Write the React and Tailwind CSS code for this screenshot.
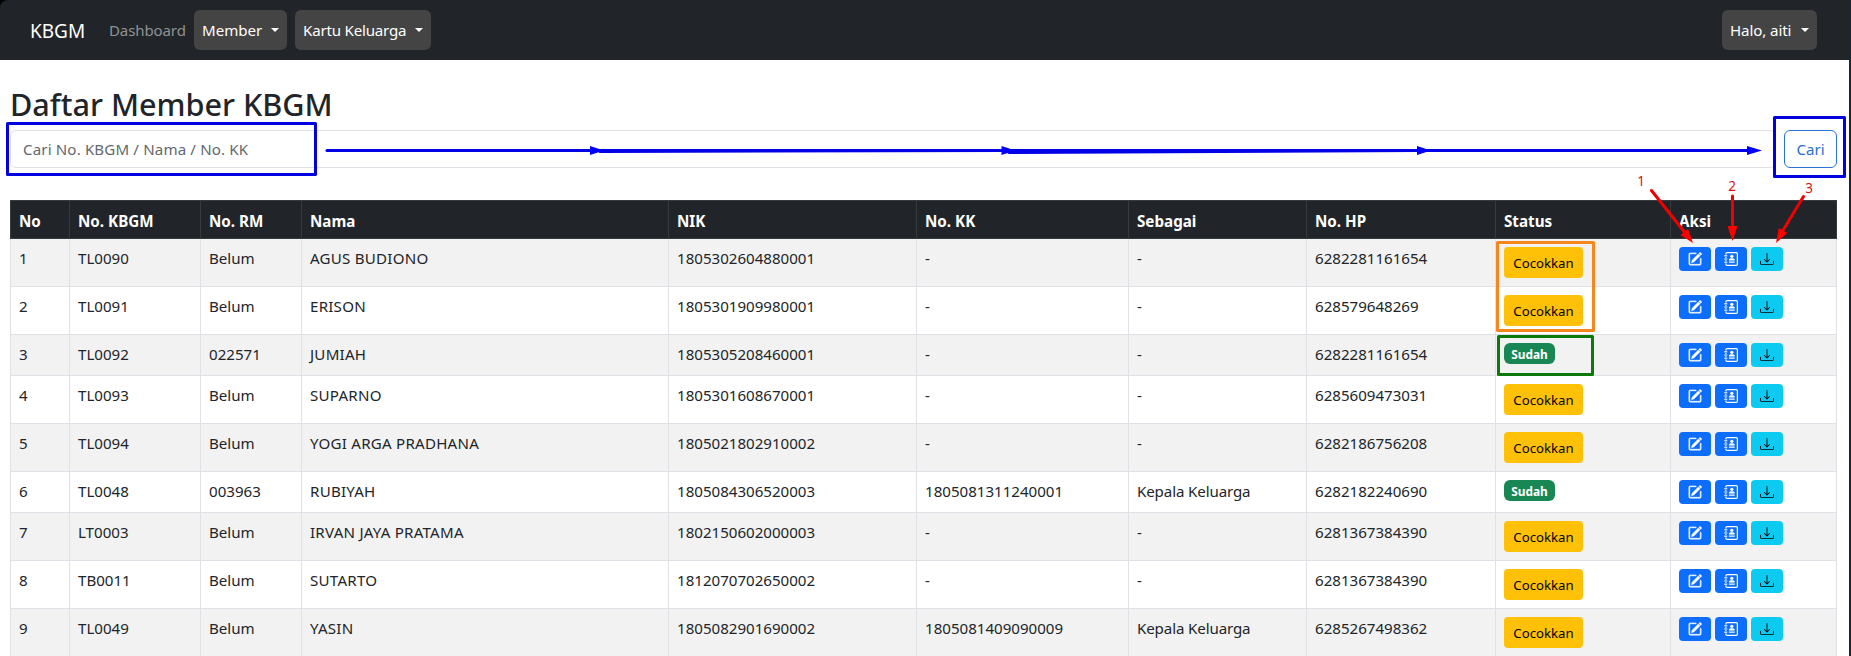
import { BsDownload, BsPencilSquare } from "react-icons/bs";

const columns = [
  { label: "No", width: "w-[60px]" },
  { label: "No. KBGM", width: "w-[131px]" },
  { label: "No. RM", width: "w-[101px]" },
  { label: "Nama", width: "w-[367px]" },
  { label: "NIK", width: "w-[248px]" },
  { label: "No. KK", width: "w-[212px]" },
  { label: "Sebagai", width: "w-[178px]" },
  { label: "No. HP", width: "w-[189px]" },
  { label: "Status", width: "w-[175px]" },
  { label: "Aksi", width: "w-[166px]" },
];

const members = [
  ["1", "TL0090", "Belum", "AGUS BUDIONO", "1805302604880001", "-", "-", "6282281161654"],
  ["2", "TL0091", "Belum", "ERISON", "1805301909980001", "-", "-", "628579648269"],
  ["3", "TL0092", "022571", "JUMIAH", "1805305208460001", "-", "-", "6282281161654"],
  ["4", "TL0093", "Belum", "SUPARNO", "1805301608670001", "-", "-", "6285609473031"],
  ["5", "TL0094", "Belum", "YOGI ARGA PRADHANA", "1805021802910002", "-", "-", "6282186756208"],
  ["6", "TL0048", "003963", "RUBIYAH", "1805084306520003", "1805081311240001", "Kepala Keluarga", "6282182240690"],
  ["7", "LT0003", "Belum", "IRVAN JAYA PRATAMA", "1802150602000003", "-", "-", "6281367384390"],
  ["8", "TB0011", "Belum", "SUTARTO", "1812070702650002", "-", "-", "6281367384390"],
  ["9", "TL0049", "Belum", "YASIN", "1805082901690002", "1805081409090009", "Kepala Keluarga", "6285267498362"],
];

// Letter spacing per column: names are set slightly wider, roles slightly tighter.
const tracking = ["", "", "", "tracking-[0.24px]", "", "", "tracking-[-0.12px]", ""];

function Caret() {
  return <span className="mt-[-1px] h-0 w-0 border-x-[4px] border-t-[4px] border-x-transparent border-t-white" />;
}

function NavButton({ children, className }) {
  return (
    <button className={`flex h-10 items-center justify-between rounded-md bg-[#444444] px-2 text-white ${className}`}>
      <span>{children}</span>
      <Caret />
    </button>
  );
}

function ContactBookIcon() {
  return (
    <svg viewBox="0 0 16 16" className="h-[14px] w-[14px]" fill="currentColor">
      <path d="M3.500 0H14a2 2 0 0 1 2 2v12a2 2 0 0 1-2 2H3.500a2 2 0 0 1-2-2v-.8h1.400v.7a.7.7 0 0 0 .7.7H13.900a.7.7 0 0 0 .7-.7V2.100a.7.7 0 0 0-.7-.7H3.600a.7.7 0 0 0-.7.7v.7H1.500V2a2 2 0 0 1 2-2z" />
      <path d="M.3 3.600h3.500v1.300H.3zM.3 7.300h3.500v1.300H.3zM.3 11h3.500v1.300H.3zM1.500 5.500h1.300v1.300H1.500zM1.500 9.200h1.300v1.300H1.500z" />
      <circle cx="8.900" cy="4.900" r="1.900" />
      <path d="M5.600 9.700V8.900c0-1.100 1.400-1.700 3.300-1.700s3.300.6 3.300 1.700v.8zM5.600 10.900h6.600v1.500H5.600z" />
    </svg>
  );
}

function Navbar() {
  return (
    <div className="bg-black">
      <nav className="flex h-[60px] items-center rounded-tl-lg bg-[#212529] pr-[34px] pl-[30px]">
        <span className="w-[79px] pt-[2px] text-[19px] text-white">KBGM</span>
        <span className="w-[85px] text-[15px] tracking-[-0.1px] text-[#909294]">Dashboard</span>
        <NavButton className="w-[93px]">Member</NavButton>
        <NavButton className="ml-2 w-[136px] tracking-[-0.2px]">Kartu Keluarga</NavButton>
        <NavButton className="mr-[-2px] ml-auto w-[95px] tracking-[-0.1px]">Halo, aiti</NavButton>
      </nav>
    </div>
  );
}

function MemberTable() {
  return (
    <table className="mt-8 w-[1827px] table-fixed border-separate border-spacing-0">
      <thead>
        <tr className="h-[39px]">
          {columns.map((c) => (
            <th
              key={c.label}
              className={`${c.width} border-y border-r border-[#373b3e] bg-[#212529] py-0 pt-[2px] pr-2 pl-2 text-left align-middle text-[15.2px] leading-6 font-bold text-white first:border-l`}
            >
              {c.label}
            </th>
          ))}
        </tr>
      </thead>
      <tbody>
        {members.map((m) => {
          const matched = m[2] !== "Belum";
          return (
            <tr key={m[0]} className={`${matched ? "h-[41px]" : "h-[48px]"} odd:bg-[#f2f2f2]`}>
              {m.map((value, i) => (
                <td key={i} className="border-r border-b border-[#dee2e6] px-2 pt-[7px] pb-[9px] align-top leading-6 first:border-l">
                  <div className={`h-6 whitespace-nowrap ${tracking[i]}`}>{value}</div>
                </td>
              ))}
              <td className="border-r border-b border-[#dee2e6] px-2 py-2 align-top">
                {matched ? (
                  <div className="flex h-[21px] w-[51px] items-center justify-center rounded-md bg-[#198754] pt-[2px] text-[11.9px] font-bold text-white">
                    Sudah
                  </div>
                ) : (
                  <button className="flex h-[31px] w-[79px] items-center justify-center rounded bg-[#ffc107] pt-[2px] text-[13.2px] text-black">
                    Cocokkan
                  </button>
                )}
              </td>
              <td className="border-r border-b border-[#dee2e6] px-2 py-2 align-top">
                <div className="flex gap-1">
                  <button className="flex h-6 w-8 items-center justify-center rounded bg-[#0d6efd] text-white">
                    <BsPencilSquare size={14} stroke="currentColor" strokeWidth={0.6} />
                  </button>
                  <button className="flex h-6 w-8 items-center justify-center rounded bg-[#0d6efd] text-white">
                    <ContactBookIcon />
                  </button>
                  <button className="flex h-6 w-8 items-center justify-center rounded bg-[#0dcaf0] text-black">
                    <BsDownload size={14} />
                  </button>
                </div>
              </td>
            </tr>
          );
        })}
      </tbody>
    </table>
  );
}

function Annotations() {
  return (
    <svg className="pointer-events-none absolute inset-0" width="1851" height="656" viewBox="0 0 1851 656">
      <g fill="none" strokeWidth="3" strokeLinejoin="round">
        <rect x="7.500" y="123.500" width="308" height="51" stroke="#0000e0" />
        <rect x="1774.500" y="117.500" width="70" height="59" stroke="#0000e0" />
        <rect x="1497.500" y="242.500" width="96" height="88" stroke="#f5871f" />
        <rect x="1498.500" y="336.500" width="94" height="38" stroke="#0b7a0b" />
      </g>
      <g stroke="#0000e6" strokeWidth="3" strokeLinecap="round">
        <path d="M327 150.500H1750" />
        <path d="M600 151.500L1003 150.500M1009 152.500L1418 150.500" />
      </g>
      <g fill="#0000ff">
        <path d="M590 146l14 4.500-14 4.500zM1001.500 146l14 4.500-14 4.500zM1417 146l14 4.500-14 4.500zM1747 146l15 4.500-15 4.500z" />
      </g>
      <g stroke="#f00000" strokeWidth="3" strokeLinecap="round">
        <path d="M1651.500 190.500L1686 234M1732.500 196V230M1803.500 196.500L1782 232" />
      </g>
      <g fill="#ff0000">
        <path d="M1693 243l-12.500-8 7.500-6zM1732.500 241l-5-15h10zM1776 243l2.800-15 8.400 5z" />
      </g>
      <g fill="#e01010" fontSize="13.5" textAnchor="middle">
        <text x="1641" y="186">1</text>
        <text x="1732" y="191">2</text>
        <text x="1809" y="193">3</text>
      </g>
    </svg>
  );
}

export default function App() {
  return (
    <div className="relative flex h-[656px] w-[1851px] overflow-hidden bg-white font-['Noto_Sans','Open_Sans',sans-serif] text-[15.1px] text-[#212529]">
      <div className="w-[1849px]">
        <Navbar />
        <main className="pl-[10px]">
          <h1 className="mt-[25px] h-[45px] text-[30.600px] leading-[38px] font-medium whitespace-nowrap">Daftar Member KBGM</h1>
          <form className="flex h-[38px] w-[1827px] gap-2">
            <input
              className="w-[1766px] rounded-md border border-[#dee2e6] px-3 tracking-[0.14px] placeholder:text-[#63686d] placeholder:opacity-100"
              placeholder="Cari No. KBGM / Nama / No. KK"
            />
            <button type="button" className="w-[53px] rounded-md border border-[#2a72d8] text-[#2a6fd0]">
              Cari
            </button>
          </form>
          <MemberTable />
        </main>
      </div>
      <div className="w-[2px] bg-[#1d2433]" />
      <Annotations />
    </div>
  );
}
